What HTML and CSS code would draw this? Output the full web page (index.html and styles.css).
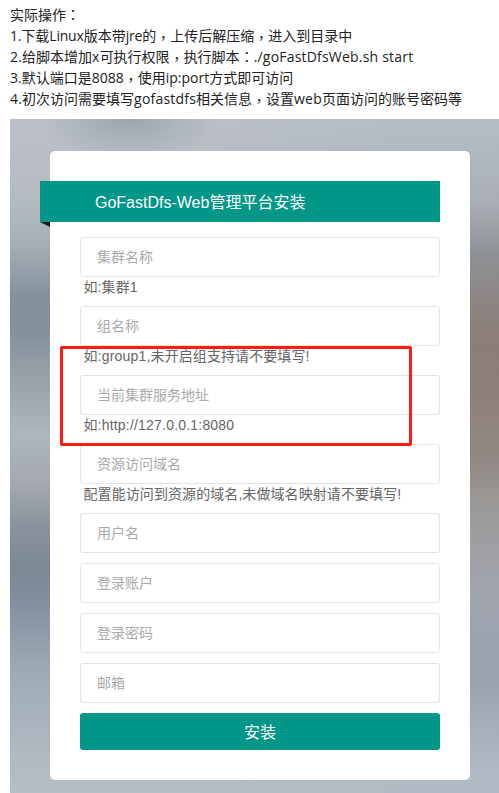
FILE: index.html
```html
<!doctype html>
<html>
    <head>
        <meta charset=utf-8>
        <title>GoFastDfs-Web</title>
        <link rel="stylesheet" href="styles.css">
    </head>
    <body>
        <div class="steps">
            <p>实际操作<span class="punct">：</span></p>
            <p><span class="tight">1.</span>下载<span class="tight">Linux</span>版本带<span class="tight">jre</span>的<span class="punct comma">，</span>上传后解压缩<span class="punct comma">，</span>进入到目录中</p>
            <p><span class="latin">2.</span>给脚本增加<span class="latin">x</span>可执行权限<span class="punct comma">，</span>执行脚本<span class="punct">：</span><span class="latin">./goFastDfsWeb.sh start</span></p>
            <p>3.默认端口是8088<span class="punct comma">，</span>使用ip:port方式即可访问</p>
            <p><span class="latin">4.</span>初次访问需要填写<span class="latin">gofastdfs</span>相关信息<span class="punct comma">，</span>设置<span class="latin">web</span>页面访问的账号密码等</p>
        </div>

        <div class="shot">
            <form class="card">
                <h1 class="card-title">GoFastDfs-Web管理平台安装</h1>
                <ul>
                    <li class="with-hint">
                        <input type="text" placeholder="集群名称">
                        <span class="hint">如:集群1</span>
                    </li>
                    <li class="with-hint">
                        <input type="text" placeholder="组名称">
                        <span class="hint">如<span class="latin">:group1,</span>未开启组支持请不要填写!</span>
                    </li>
                    <li class="with-hint">
                        <input type="text" placeholder="当前集群服务地址">
                        <span class="hint">如<span class="latin">:http://127.0.0.1:8080</span></span>
                    </li>
                    <li class="with-hint">
                        <input type="text" placeholder="资源访问域名">
                        <span class="hint">配置能访问到资源的域名,未做域名映射请不要填写!</span>
                    </li>
                    <li><input type="text" placeholder="用户名"></li>
                    <li><input type="text" placeholder="登录账户"></li>
                    <li><input type="password" placeholder="登录密码"></li>
                    <li><input type="text" placeholder="邮箱"></li>
                </ul>
                <button class="btn-install" type="button">安装</button>
            </form>
            <div class="red-box"></div>
        </div>
    </body>
</html>
```

FILE: styles.css
```css
:root {
  --green: #009688;
  --lineColor: #e4e4e4;
  --hintColor: #666;
}

* {
  padding: 0;
  margin: 0;
  box-sizing: border-box;
}

ul {
  list-style: none;
}

html,
body {
  height: 793px;
  overflow: hidden;
}

body {
  background: #fff;
  color: #222;
  font: 14px/21px "Open Sans", "Noto Sans CJK SC", sans-serif;
  padding: 4px 0 0 10px;
}

.steps {
  margin-bottom: 10px;
}

/* TC face keeps the full width comma and colon centred in their box */
.punct {
  font-family: "Noto Sans CJK TC", sans-serif;
}

.comma {
  display: inline-block;
  transform: translateY(2px);
}

.latin {
  letter-spacing: 0.2px;
}

.tight {
  letter-spacing: -0.2px;
}

.shot {
  position: relative;
  height: 674px;
  padding: 32px 0 0 40px;
  background:
    radial-gradient(ellipse 90px 42px at 120px 0, #9ca6ae, transparent),
    linear-gradient(#bcc0c7 0, #b4bbc0 83px, #a6aeb4 126px, #84909b 178px, #84909b 212px, #98a0a6 256px, #aeb5bd 316px, #a4a9af 364px, #8a929c 407px, #7c8794 450px, #84909f 485px, #a0acb5 559px, #b3bac2 645px, #b7bdc5 100%);
}

/* right side of the blurred photo is warmer */
.shot::before {
  content: "";
  position: absolute;
  top: 0;
  right: 0;
  bottom: 0;
  width: 300px;
  background: linear-gradient(#b4bcc4 9px, #a9aeb4 83px, #8f9296 134px, #8a7f7b 204px, #8c7d78 256px, #918985 342px, #9b9997 385px, #a1a5ae 472px, #9aa2ae 559px, #b2bac3 658px);
  -webkit-mask-image: linear-gradient(to right, transparent, #000 70%);
  mask-image: linear-gradient(to right, transparent, #000 70%);
}

.card {
  position: relative;
  width: 420px;
  height: 629px;
  padding: 30px 30px 0;
  background: #fff;
  border-radius: 5px;
  font-family: "Liberation Sans", "Noto Sans CJK SC", sans-serif;
}

.card-title {
  position: relative;
  width: 400px;
  height: 41px;
  margin: 0 0 15px -40px;
  padding-left: 55px;
  background: var(--green);
  color: #fff;
  font-size: 16px;
  font-weight: normal;
  line-height: 43px;
}

/* little fold under the title bar */
.card-title::after {
  content: "";
  position: absolute;
  left: 0;
  top: 41px;
  border-top: 5px solid #1a1a1a;
  border-left: 10px solid transparent;
}

.card li {
  margin-bottom: 10px;
}

.card li.with-hint {
  margin-bottom: 0;
  height: 69px;
}

.card input {
  display: block;
  width: 100%;
  height: 40px;
  padding-left: 16px;
  border: 1px solid var(--lineColor);
  border-radius: 3px;
  background: #fff;
  font-family: inherit;
  font-size: 14px;
  outline: none;
}

.card input::placeholder {
  color: #aaa;
  opacity: 1;
}

.hint {
  display: block;
  padding-left: 3.5px;
  color: var(--hintColor);
  font-size: 14px;
  line-height: 20px;
  letter-spacing: 0.08px;
}

.btn-install {
  display: block;
  width: 100%;
  height: 37px;
  padding-bottom: 2px;
  border: 0;
  border-radius: 3px;
  background: var(--green);
  color: #fff;
  font-family: inherit;
  font-size: 16px;
}

.red-box {
  position: absolute;
  left: 50px;
  top: 227px;
  width: 352px;
  height: 100px;
  border: 3px solid #ff1a12;
  border-radius: 2px;
}
```
